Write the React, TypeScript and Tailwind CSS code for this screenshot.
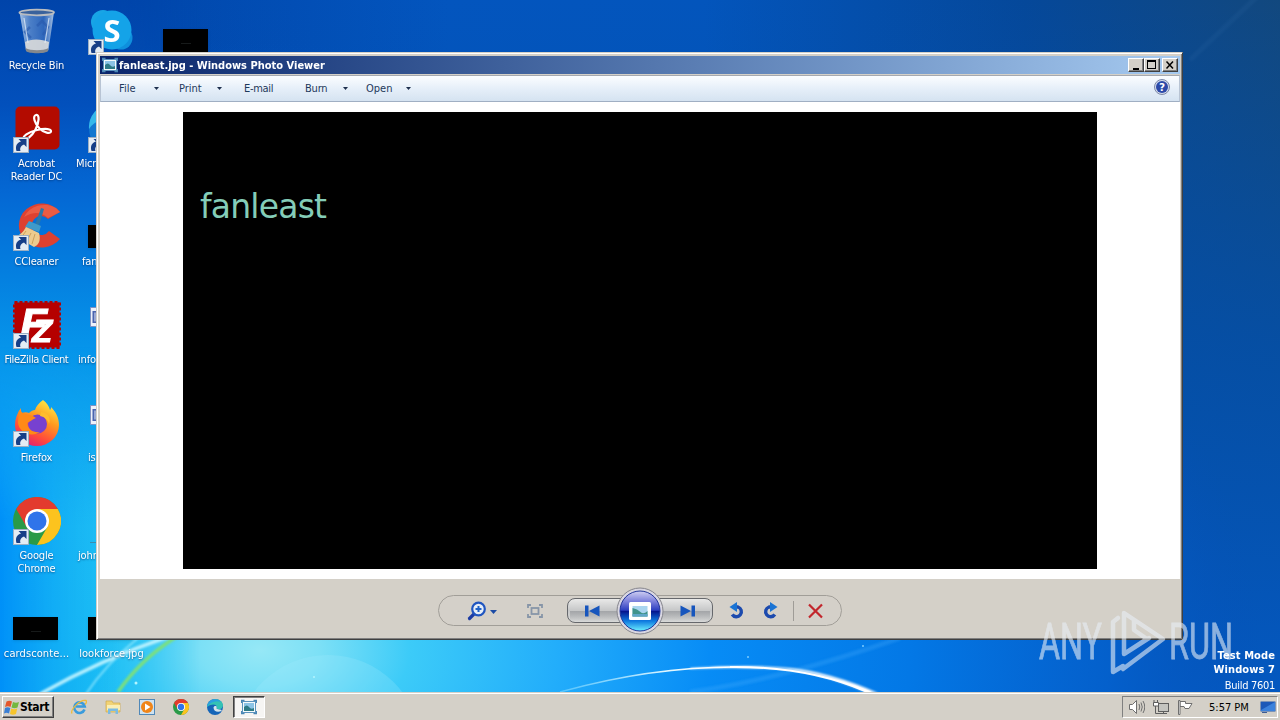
import React from 'react';

const Shortcut: React.FC = () => (
  <g>
    <rect x="0.5" y="32.5" width="15" height="15" fill="#e4ecf4" stroke="#9db0c4" />
    <path d="M3.500 46c-1.500-5 .5-8.500 4.500-9.500l-2.500-2.500h8v8l-2.500-2.500C8 40.500 6.500 43 7.500 46z" fill="#173f87" />
  </g>
);

const RecycleBin: React.FC = () => (
  <svg width="48" height="48" viewBox="0 0 48 48">
    <defs>
      <linearGradient id="bin" x1="0" x2="1">
        <stop offset="0" stopColor="#c9dbee" stopOpacity="0.85" />
        <stop offset="0.3" stopColor="#7fa6d8" stopOpacity="0.6" />
        <stop offset="0.7" stopColor="#4c7cc4" stopOpacity="0.6" />
        <stop offset="1" stopColor="#c0d4ea" stopOpacity="0.9" />
      </linearGradient>
    </defs>
    <path d="M6.500 5h34.500l-5.500 38c-1 3.500-21 3.500-22.500 0z" fill="url(#bin)" />
    <path d="M12 35c5-3.500 17-3.500 24 0l-1 8c-2 3-20 3-22 0z" fill="#dcdcda" opacity="0.9" />
    <path d="M12.500 41c5 3 18 3 23 0l-.5 3c-2 3-20 3-22 0z" fill="#85888c" />
    <path d="M24 19l5-5 6 6-5 8M17 20l-5 5 6 6" fill="none" stroke="#2a5aae" strokeWidth="2.500" opacity="0.65" />
    <path d="M11 11l4 25M36 11l-4 25" stroke="#e8f1fa" strokeWidth="1.200" opacity="0.700" />
    <ellipse cx="23.700" cy="5.500" rx="17.300" ry="2.800" fill="#3a629c" stroke="#b9bcc0" strokeWidth="1.800" />
  </svg>
);

const Skype: React.FC = () => (
  <svg width="48" height="48" viewBox="0 0 48 48">
    <circle cx="15" cy="15" r="12" fill="#18a5e6" />
    <circle cx="33" cy="31" r="11.500" fill="#0f8fdc" />
    <circle cx="24" cy="23" r="19.500" fill="#14a3e8" />
    <text x="24" y="34.500" textAnchor="middle" fontFamily="Open Sans, sans-serif" fontWeight="700" fontSize="31" fill="#fff">S</text>
    <Shortcut />
  </svg>
);

const Acrobat: React.FC = () => (
  <svg width="48" height="48" viewBox="0 0 48 48">
    <rect x="2.500" y="1.500" width="44" height="43" rx="5" fill="#b30b00" />
    <path
      d="M11 34c-2-2.500 4-7 13-9s14.500-1 14 1.500-7 1.500-11.500-3-7.500-12.500-3.500-13.500 3 8-.5 14.500S13 36 11 34z"
      fill="none"
      stroke="#fff"
      strokeWidth="2.200"
    />
    <Shortcut />
  </svg>
);

const Edge: React.FC = () => (
  <svg width="48" height="48" viewBox="0 0 48 48">
    <circle cx="24" cy="24" r="23" fill="#1378d0" />
    <path d="M1 24A23 23 0 0 1 47 20C36 10 12 8 1 24z" fill="#35b8ea" />
    <Shortcut />
  </svg>
);

const CCleaner: React.FC = () => (
  <svg width="48" height="48" viewBox="0 0 48 48">
    <path d="M47 9A23 22 0 1 0 47 36l-11-8a9.500 9.500 0 1 1-1-12z" fill="#dd4130" />
    <path d="M43 5A22 20 0 0 0 11 14c10-6 17-5 24 1l12-6z" fill="#ea5c44" />
    <path d="M28 5l3 1-6 20-4-1.500z" fill="#2b77a8" />
    <path d="M16 18l12 5-2 6-14-5z" fill="#3e9acb" />
    <path d="M13 24l13 6c2 7 0 12-5 14L2 33c6-1 8-4 11-9z" fill="#eecb8e" />
    <path d="M13 28L8 35M18 30l-4 8M22 31l-3 10" stroke="#c99b55" strokeWidth="0.900" />
    <Shortcut />
  </svg>
);

const FileZilla: React.FC = () => (
  <svg width="48" height="48" viewBox="0 0 48 48">
    <rect x="1.500" y="1.500" width="45" height="45" fill="#b50000" stroke="#b50000" strokeWidth="3" strokeDasharray="3 2" />
    <g fontFamily="Liberation Sans, sans-serif" fontWeight="700" fontStyle="italic" fill="#fff" stroke="#fff">
      <text x="7" y="37" fontSize="42" textLength="27" lengthAdjust="spacingAndGlyphs">F</text>
      <text x="19" y="41" fontSize="31" textLength="20" lengthAdjust="spacingAndGlyphs">Z</text>
    </g>
    <Shortcut />
  </svg>
);

const Firefox: React.FC = () => (
  <svg width="48" height="48" viewBox="0 0 48 48">
    <defs>
      <linearGradient id="fox" x1="0.800" y1="0" x2="0.300" y2="1">
        <stop offset="0" stopColor="#fff04a" />
        <stop offset="0.400" stopColor="#ff9a1f" />
        <stop offset="0.750" stopColor="#ff4a3c" />
        <stop offset="1" stopColor="#e01f74" />
      </linearGradient>
    </defs>
    <path
      d="M30 1c4 3 6 6 7 10 1-1 1-2 1-3 5 5 8 11 8 18a22 21 0 0 1-44 0c0-6 2-12 6-17 0 2 0 4 1 5 2-1 5-1 7 0 2-2 4-3 6-3 1-4 4-7 8-10z"
      fill="url(#fox)"
    />
    <circle cx="24.500" cy="25" r="9.500" fill="#7741d0" />
    <path d="M28 13c8 1 10 7 8 12-1-4-4-7-9-8z" fill="#ffbd2e" />
    <path d="M6 11c5 6 11 3 17 8-5 2-6 4-9 5 1 7 7 10 13 9-9 6-22 0-22-10z" fill="#ff8a16" />
    <Shortcut />
  </svg>
);

const Chrome: React.FC<{ size?: number; shortcut?: boolean }> = ({ size = 48, shortcut }) => (
  <svg width={size} height={size} viewBox="0 0 48 48">
    <circle cx="24" cy="24" r="24" fill="#2a9a48" />
    <path d="M24 12h20.800A24 24 0 0 0 3.200 12L13.600 30z" fill="#e33b2e" />
    <path d="M24 12h20.800A24 24 0 0 1 24 48l10.400-18z" fill="#fcc31e" />
    <circle cx="24" cy="24" r="12" fill="#fff" />
    <circle cx="24" cy="24" r="9.500" fill="#2f74ea" />
    {shortcut && <Shortcut />}
  </svg>
);

const DocFile: React.FC = () => (
  <svg width="48" height="48" viewBox="0 0 48 48">
    <path d="M2.500 6.500h38v19h-38z" fill="#eef1fa" stroke="#7f93c4" />
    <path d="M4.500 10h10v12h-10z" fill="#4a64ae" />
    <path d="M7 11.500v9M10 13v6" stroke="#e8ecf8" />
  </svg>
);

const Thumb: React.FC = () => (
  <div className="flex h-12 w-12 items-end pb-[3px]">
    <div className="flex h-[23px] w-[45px] items-center justify-center bg-black shadow-sm">
      <div className="mt-1.5 h-px w-2.5 bg-[#171a1a]" />
    </div>
  </div>
);

const LineFile: React.FC = () => (
  <div className="flex h-12 w-12 items-end pb-0.5">
    <div className="ml-0.5 h-px w-10 bg-[#3a8cae]" />
  </div>
);

type Item = { label: string; icon: React.ReactNode; tail?: string };

const items: Item[] = [
  { label: 'Recycle Bin', icon: <RecycleBin /> },
  { label: 'Acrobat Reader DC', icon: <Acrobat /> },
  { label: 'CCleaner', icon: <CCleaner /> },
  { label: 'FileZilla Client', icon: <FileZilla />, tail: 'text-center tracking-[-0.35px]' },
  { label: 'Firefox', icon: <Firefox /> },
  { label: 'Google Chrome', icon: <Chrome shortcut /> },
  { label: 'cardsconte...', icon: <Thumb />, tail: 'text-center tracking-[0.1px]' },
  { label: '', icon: <Skype /> },
  { label: 'Micr', icon: <Edge />, tail: 'pl-0.5' },
  { label: 'fan', icon: <Thumb />, tail: 'pl-2' },
  { label: 'info', icon: <DocFile />, tail: 'pl-1' },
  { label: 'is', icon: <DocFile />, tail: 'pl-3.5' },
  { label: 'john', icon: <LineFile />, tail: 'pl-1' },
  { label: 'lookforce.jpg', icon: <Thumb />, tail: 'text-center tracking-[0.05px]' },
  { label: '', icon: <Thumb /> },
];

const Wallpaper: React.FC = () => (
  <svg className="absolute inset-0" width="1280" height="692" viewBox="0 0 1280 692">
    <defs>
      <linearGradient id="sky">
        <stop offset="0" stopColor="#0041a4" />
        <stop offset="0.350" stopColor="#0355be" />
        <stop offset="0.550" stopColor="#0355bc" />
        <stop offset="0.800" stopColor="#05489a" />
        <stop offset="1" stopColor="#12487e" />
      </linearGradient>
      <linearGradient id="low" x1="0" y1="0" x2="0" y2="1">
        <stop offset="0" stopColor="#0350ac" stopOpacity="0" />
        <stop offset="0.500" stopColor="#0350ac" stopOpacity="0.800" />
        <stop offset="1" stopColor="#0458c0" />
      </linearGradient>
      <radialGradient id="glow" gradientUnits="userSpaceOnUse" cx="0" cy="0" r="1" gradientTransform="translate(260 650) scale(1000 610)">
        <stop offset="0" stopColor="#96e8f6" />
        <stop offset="0.060" stopColor="#7ce0f6" />
        <stop offset="0.150" stopColor="#3ccbf8" />
        <stop offset="0.300" stopColor="#22adfb" />
        <stop offset="0.450" stopColor="#078cf6" />
        <stop offset="0.650" stopColor="#0378e6" />
        <stop offset="0.850" stopColor="#0462cf" stopOpacity="0.800" />
        <stop offset="1" stopColor="#0450b8" stopOpacity="0" />
      </radialGradient>
      {/* Left column, dark at the top and cyan near the taskbar */}
      <linearGradient id="side" x1="0" y1="0" x2="0" y2="1">
        <stop offset="0" stopColor="#0044aa" />
        <stop offset="0.150" stopColor="#0250bc" />
        <stop offset="0.280" stopColor="#0468d4" />
        <stop offset="0.400" stopColor="#0480e0" />
        <stop offset="0.500" stopColor="#0694ea" />
        <stop offset="0.620" stopColor="#10a6f0" />
        <stop offset="0.760" stopColor="#20c0f4" />
        <stop offset="1" stopColor="#1cbef4" />
      </linearGradient>
      <linearGradient id="rim">
        <stop offset="0" stopColor="#0090f8" />
        <stop offset="1" stopColor="#10b0f4" stopOpacity="0" />
      </linearGradient>
      <linearGradient id="rimFade" x1="0" y1="0" x2="0" y2="1">
        <stop offset="0.500" stopColor="#000" />
        <stop offset="0.750" stopColor="#fff" />
      </linearGradient>
      <mask id="rimMask">
        <rect width="120" height="692" fill="url(#rimFade)" />
      </mask>
      <linearGradient id="sideFade">
        <stop offset="0" stopColor="#fff" />
        <stop offset="0.450" stopColor="#fff" />
        <stop offset="1" stopColor="#000" />
      </linearGradient>
      <mask id="sideMask">
        <rect width="200" height="692" fill="url(#sideFade)" />
      </mask>
      <linearGradient id="arc">
        <stop offset="0" stopColor="#8fe0ff" stopOpacity="0.500" />
        <stop offset="0.600" stopColor="#dff6ff" />
        <stop offset="1" stopColor="#fff" />
      </linearGradient>
      <filter id="soft" x="-20%" y="-20%" width="140%" height="140%">
        <feGaussianBlur stdDeviation="1.300" />
      </filter>
    </defs>
    <rect width="1280" height="692" fill="url(#sky)" />
    <rect width="1280" height="692" fill="url(#low)" />
    <rect width="1280" height="692" fill="url(#glow)" />
    <rect width="200" height="692" fill="url(#side)" mask="url(#sideMask)" />
    <rect width="120" height="692" fill="url(#rim)" mask="url(#rimMask)" />
    <circle cx="328" cy="748" r="93" fill="#a8ecff" opacity="0.220" />
    <g fill="none" filter="url(#soft)">
      <path d="M40 694Q100 660 170 636" stroke="#c4f5ff" strokeWidth="3.500" opacity="0.900" />
      <path d="M86 694Q105 665 138 638" stroke="#9cecff" strokeWidth="2" opacity="0.700" />
      <path d="M118 692Q140 660 176 637" stroke="#7de07c" strokeWidth="3.500" />
      <path d="M690 692Q780 680 900 638" stroke="#4cb4ff" strokeWidth="5" opacity="0.250" />
    </g>
    <path d="M560 692Q650 667 735 667" fill="none" stroke="url(#arc)" strokeWidth="1.500" />
    <path d="M690 668Q750 664 790 668Q830 672 878 693L868 693Q820 672 780 669Q730 667 690 669z" fill="#fff" filter="url(#soft)" />
    <path d="M730 666Q810 665 874 693L867 693Q808 667 730 668z" fill="#fff" />
    <path d="M1190 60L1262 -8" stroke="#3f78b0" strokeWidth="5" opacity="0.120" filter="url(#soft)" />
    <circle cx="136" cy="683" r="1.500" fill="#b4f5ff" />
    <circle cx="314" cy="677" r="1" fill="#b4f5ff" />
    <circle cx="748" cy="657" r="1" fill="#7ccbff" />
    <circle cx="863" cy="646" r="1" fill="#7ccbff" />
  </svg>
);

const PhotoIcon: React.FC = () => (
  <svg width="16" height="16" viewBox="0 0 16 16">
    <path d="M0.500 4V1.500h3M12.500 1.500h3V4M0.500 12v2.500h3M12.500 14.500h3V12" fill="none" stroke="#4a86b4" strokeWidth="1.500" />
    <rect x="1.500" y="2.500" width="13" height="11" fill="#f4fafc" stroke="#5b93bd" />
    <rect x="3" y="4" width="10" height="8" fill="#8cc4e6" />
    <path d="M3 8q3-3 5 0t5 1v3H3z" fill="#2d7a86" />
  </svg>
);

const Caret: React.FC = () => (
  <svg width="5" height="3" viewBox="0 0 5 3">
    <path d="M0 0h5L2.500 3z" fill="#1e2f4d" />
  </svg>
);

const captionBtn =
  'flex h-3.5 w-4 items-center justify-center border border-t-white border-l-white border-r-[#404040] border-b-[#404040] bg-[#d4d0c8] shadow-[inset_-1px_-1px_0_#808080]';

const TitleBar: React.FC = () => (
  <div className="flex h-[18px] items-center bg-linear-to-r from-[#0a246a] to-[#a6caf0] px-0.5">
    <PhotoIcon />
    <span className="ml-px flex-1 pt-px text-[11px] leading-[17px] font-bold whitespace-nowrap text-white">
      fanleast.jpg - Windows Photo Viewer
    </span>
    <button className={captionBtn}>
      <svg width="12" height="10" viewBox="0 0 12 10">
        <path d="M3 8h6v2H3z" />
      </svg>
    </button>
    <button className={captionBtn}>
      <svg width="12" height="10" viewBox="0 0 12 10">
        <path d="M1 0h9v9H1zM2 2v6h7V2z" fillRule="evenodd" />
      </svg>
    </button>
    <button className={`${captionBtn} ml-0.5`}>
      <svg width="12" height="10" viewBox="0 0 12 10">
        <path d="M2.500 1.500l6.500 7M9 1.500l-6.500 7" stroke="#000" strokeWidth="1.500" />
      </svg>
    </button>
  </div>
);

const MenuBar: React.FC = () => (
  <div className="mt-px flex h-[27px] items-center border border-t-[#a5a9b0] border-r-[#b8c4d4] border-b-[#a0afc3] border-l-[#b8c4d4] bg-linear-to-b from-[#fbfdff] via-[#e6eff9] to-[#d5e3f1] pl-[18px] text-[11px] text-[#1e395b]">
    <span className="w-[35px] pt-0.5">File</span>
    <span className="w-[25px]"><Caret /></span>
    <span className="w-[38px] pt-0.5">Print</span>
    <span className="w-[27px]"><Caret /></span>
    <span className="w-[61px] pt-0.5 tracking-[-0.3px]">E-mail</span>
    <span className="w-[38px] pt-0.5 tracking-[-0.2px]">Burn</span>
    <span className="w-[23px]"><Caret /></span>
    <span className="w-10 pt-0.5">Open</span>
    <span className="flex-1"><Caret /></span>
    <svg className="mr-[9px] mb-[3px]" width="16" height="16" viewBox="0 0 16 16">
      <circle cx="8" cy="8" r="7.500" fill="#d5dcec" stroke="#7c88a8" />
      <circle cx="8" cy="8" r="6" fill="#2c49a8" />
      <text x="8" y="12" textAnchor="middle" fontFamily="DejaVu Sans, sans-serif" fontWeight="700" fontSize="10.500" fill="#fff">?</text>
    </svg>
  </div>
);

const Controls: React.FC = () => (
  <div className="flex h-[57px] flex-1 items-center justify-center pt-1.5">
    <div className="flex h-[31px] w-[404px] items-center rounded-full border border-[#a19e98] bg-[#d4d0c9]">
      <svg className="ml-7" width="20" height="20" viewBox="0 0 20 20">
        <path d="M8 12L2.500 17.500" stroke="#1c3ca4" strokeWidth="3.200" strokeLinecap="round" />
        <circle cx="11.500" cy="8" r="6.300" fill="#e6eef8" stroke="#1f55c0" strokeWidth="2.200" />
        <path d="M11.500 5v6M8.500 8h6" stroke="#1f62c8" strokeWidth="2" />
      </svg>
      <svg className="mt-0.5 ml-[3px]" width="7" height="4" viewBox="0 0 7 4">
        <path d="M0 0h7L3.500 4z" fill="#1b4ba5" />
      </svg>
      <svg className="ml-[30px]" width="16" height="14" viewBox="0 0 16 14">
        <path d="M1 4V1h3M12 1h3v3M1 10v3h3M12 13h3v-3" fill="none" stroke="#8795a8" strokeWidth="1.800" />
        <rect x="4.500" y="4" width="7" height="6" fill="none" stroke="#8795a8" strokeWidth="1.800" />
      </svg>
      <div className="relative ml-6 flex h-[25px] w-[146px] items-center justify-between rounded-[8px] border border-[#66686c] bg-linear-to-b from-[#e9e9e8] from-0% via-[#c6c7c8] via-50% to-[#d9dad9] px-[17px]">
        <div className="absolute inset-x-0.5 top-1/2 bottom-0 bg-linear-to-b from-[#a3a5a8] to-transparent" />
        <svg className="relative" width="15" height="12" viewBox="0 0 15 12">
          <path d="M0 0.500h3.500v11H0zM14.500 0.500v11L4 6z" fill="#1655bd" />
        </svg>
        <svg className="absolute top-[-12px] left-[48px]" width="48" height="48" viewBox="0 0 48 48">
          <defs>
            <linearGradient id="orb" x1="0" y1="0" x2="0" y2="1">
              <stop offset="0" stopColor="#d0d0f2" />
              <stop offset="0.250" stopColor="#7f83dc" />
              <stop offset="0.480" stopColor="#2c3fc0" />
              <stop offset="0.510" stopColor="#04158e" />
              <stop offset="0.750" stopColor="#0e7ae0" />
              <stop offset="1" stopColor="#6cf0ff" />
            </linearGradient>
          </defs>
          <circle cx="24" cy="24" r="23" fill="#d9d7e2" stroke="#85858c" />
          <circle cx="24" cy="24" r="20" fill="url(#orb)" stroke="#22369a" />
          <rect x="13" y="15" width="22" height="18" rx="1.500" fill="#fff" />
          <rect x="16.500" y="19" width="15" height="10.500" fill="#a9d5ef" />
          <path d="M16.500 21q5 1 8 4t7-1v5.500h-15z" fill="#40938a" />
          <path d="M16.500 27h15v2.500h-15z" fill="#5fa7c8" />
        </svg>
        <svg className="relative" width="15" height="12" viewBox="0 0 15 12">
          <path d="M15 0.500h-3.500v11H15zM0.500 0.500v11L11 6z" fill="#1655bd" />
        </svg>
      </div>
      <svg className="ml-4" width="17" height="18" viewBox="0 0 17 18">
        <path d="M6 5h3a5 5 0 1 1-5.800 7.500" fill="none" stroke="#1c4aae" strokeWidth="3.400" />
        <path d="M8 0v10L0.500 5z" fill="#1a74d4" />
      </svg>
      <svg className="ml-[15px]" width="17" height="18" viewBox="0 0 17 18">
        <path d="M11 5H8a5 5 0 1 0 5.800 7.500" fill="none" stroke="#1c4aae" strokeWidth="3.400" />
        <path d="M9 0v10L16.500 5z" fill="#1a74d4" />
      </svg>
      <div className="ml-[15px] h-5 w-px bg-[#9f9c97]" />
      <svg className="ml-3.5" width="16" height="16" viewBox="0 0 16 16">
        <path d="M1 1.500l13 13M14 1.500l-13 13" stroke="#c2262c" strokeWidth="2.200" />
      </svg>
    </div>
  </div>
);

const PhotoViewer: React.FC = () => (
  <div className="absolute top-[52px] left-[96px] flex h-[588px] w-[1087px] flex-col border border-t-[#d4d0c8] border-r-[#404040] border-b-[#404040] border-l-[#d4d0c8] bg-[#d4d0c8] py-[3px] pr-0.5 pl-[3px] shadow-[inset_1px_1px_0_#fff,inset_-1px_-1px_0_#808080]">
    <TitleBar />
    <MenuBar />
    <div className="h-[477px] bg-white px-[83px] pt-2.5">
      <div className="h-[457px] bg-black pt-[73px] pl-[17px]">
        <span className="block font-['DejaVu_Sans',sans-serif] text-[33px] leading-[44px] tracking-[-0.8px] text-[#84cdb8]">fanleast</span>
      </div>
    </div>
    <Controls />
  </div>
);

const Watermark: React.FC = () => (
  <svg className="absolute top-[600px] left-[1030px] opacity-60" width="210" height="80" viewBox="0 0 210 80">
    <g fontFamily="Roboto, sans-serif" fontSize="50" fill="#e8eef6" stroke="#e8eef6" strokeWidth="0.800">
      <text x="9" y="59" textLength="63" lengthAdjust="spacingAndGlyphs">ANY</text>
      <text x="139" y="59" textLength="64" lengthAdjust="spacingAndGlyphs">RUN</text>
    </g>
    <g fill="none" stroke="#e8eef6" strokeWidth="4.500" strokeLinejoin="round" strokeLinecap="round">
      <path d="M94 54V13L133 39L93 69M94 54L117 39L104 30V20M94 54L119 38" />
      <path d="M88 18L83 22V72L93 66" />
    </g>
  </svg>
);

const Taskbar: React.FC = () => (
  <div className="relative flex h-7 items-center border-t border-[#d4d0c8] bg-[#d4d0c8] px-0.5 pt-px text-[11px] shadow-[inset_0_1px_0_#fff]">
    <button className="flex h-[22px] w-[52px] items-center border border-t-white border-r-[#404040] border-b-[#404040] border-l-white pl-px shadow-[inset_-1px_-1px_0_#808080]">
      <svg width="16" height="15" viewBox="0 0 16 15">
        <path d="M2.500 1.500q3-1.500 5.500 0L6.500 7Q4 5.500 1 7z" fill="#e4572b" />
        <path d="M9 2q3 1.500 6 0L13.500 7.500q-3 1.500-6 0z" fill="#74b840" />
        <path d="M1 8q2.500-1.500 5.300 0L5 13.500q-2.500-1.500-5 0z" fill="#3a7fd4" />
        <path d="M7.200 8.500q3 1.500 6 0L12 14q-3 1.500-6 0z" fill="#f7c52c" />
      </svg>
      <span className="text-[12px] font-bold tracking-[-0.3px]">Start</span>
    </button>
    <div className="ml-[17px] flex items-center gap-[18px]">
      <svg width="16" height="16" viewBox="0 0 16 16">
        <path d="M13.500 10.500A5.300 5.300 0 1 1 13.700 7.500H5" fill="none" stroke="#3a9bdc" strokeWidth="2.600" />
        <path d="M1 14.500C-1 11 9 0 15 1.500c1 1 0 3-1 4" fill="none" stroke="#eebb3a" strokeWidth="1.300" />
      </svg>
      <svg width="16" height="16" viewBox="0 0 16 16">
        <path d="M1 2h6l1 2h7v9H1z" fill="#f1d376" stroke="#cfa94a" strokeWidth="0.700" />
        <path d="M2 6h13v5H2z" fill="#fbeeb4" />
        <path d="M3 15V9.500h10V15h-2.500v-3h-5v3z" fill="#7cbbe2" />
      </svg>
      <svg width="16" height="16" viewBox="0 0 16 16">
        <rect x="0.500" y="0.500" width="15" height="15" fill="#cfe2f0" stroke="#5088b8" />
        <circle cx="8" cy="8" r="6" fill="#f08519" />
        <path d="M6 4.500v7L11.500 8z" fill="#fff" />
      </svg>
      <Chrome size={16} />
      <svg width="16" height="16" viewBox="0 0 16 16">
        <circle cx="8" cy="8" r="8" fill="#1565b8" />
        <path d="M0 8C1-2 15-2 16 6c0 4-4 5-6.500 3.500C11 7 7 3 0 8z" fill="#34c2b4" />
        <path d="M0 8C1-2 12-1 14 3 9 1 3 3 0 8z" fill="#2a9fe0" />
        <path d="M6.500 8.500c0 4 4 5 8 3.500 1-2-3-1-5-2.500 0-1 .5-1 0-2-1-1-3 0-3 1z" fill="#d4e4ec" />
      </svg>
    </div>
    <div className="ml-2.5 flex h-[22px] w-8 items-center justify-center border border-t-[#404040] border-r-white border-b-white border-l-[#404040] bg-[#f6f5f3] shadow-[inset_1px_1px_0_#808080]">
      <PhotoIcon />
    </div>
    <div className="ml-auto flex h-[22px] w-[156px] items-center border border-t-[#808080] border-r-white border-b-white border-l-[#808080] pl-1.5">
      <svg width="16" height="16" viewBox="0 0 16 16" fill="none" stroke="#6f6f6f">
        <path d="M0.500 5.500h3L7.500 1.500v13l-4-4h-3z" fill="#fff" />
        <path d="M10 5q1.500 3 0 6M12 3.500q2.500 4.500 0 9M14 2q3.500 6 0 12" />
      </svg>
      <svg className="ml-2" width="16" height="16" viewBox="0 0 16 16" fill="none" stroke="#5e5e5e">
        <rect x="5.500" y="4.500" width="10" height="8" fill="#c4c4c0" />
        <path d="M7 14.500h7M10.500 12.500v2M1 1v3M4.500 1v3M2.500 7v7.500H7" />
        <path d="M0.500 3.500h5v3.500h-5z" fill="#fff" />
      </svg>
      <svg className="ml-2" width="16" height="16" viewBox="0 0 16 16" stroke="#6f6f6f">
        <path d="M3 2.500h5.500v2h6.500l-3 5H8l-1-2H3z" fill="#fff" />
        <path d="M1.500 1.500h1.500v14h-1.500z" fill="#fff" />
      </svg>
      <span className="ml-4 w-[51px] pt-0.5 whitespace-nowrap">5:57 PM</span>
      <svg width="16" height="16" viewBox="0 0 16 16">
        <rect x="0.500" y="2.500" width="15" height="10" rx="1" fill="#1d59b8" stroke="#7d93b5" />
        <path d="M1 11L15 3v9H1z" fill="#3c82dc" />
        <path d="M2 13.500h5" stroke="#3a5b94" />
      </svg>
    </div>
  </div>
);

const App: React.FC = () => {
  return (
    <div className="flex h-[720px] w-[1280px] flex-col overflow-hidden font-['DejaVu_Sans_Condensed','DejaVu_Sans',sans-serif] text-black">
      <div className="relative flex-1">
        <Wallpaper />
        {/* Desktop icons */}
        <div className="relative -ml-px grid h-[692px] grid-flow-col auto-cols-[75px] grid-rows-[repeat(7,98px)] justify-start overflow-hidden pt-[7px] text-[11px] leading-[13px] tracking-[-0.15px] text-white">
          {items.map((item, i) => (
            <div key={i} className="flex flex-col">
              <div className="pl-3.5">{item.icon}</div>
              <span className={`mt-1 [text-shadow:0_1px_2px_rgba(0,30,80,0.6)] ${item.tail ?? 'px-1 text-center'}`}>
                {item.label}
              </span>
            </div>
          ))}
        </div>
        <PhotoViewer />
        <Watermark />
        <div className="absolute right-[5px] -bottom-px text-right text-[11px] leading-[14px] font-bold tracking-[0.1px] text-white">
          <div>Test Mode</div>
          <div>Windows 7</div>
          <div className="mt-0.5 font-normal tracking-[-0.3px]">Build 7601</div>
        </div>
      </div>
      <Taskbar />
    </div>
  );
};

export default App;
